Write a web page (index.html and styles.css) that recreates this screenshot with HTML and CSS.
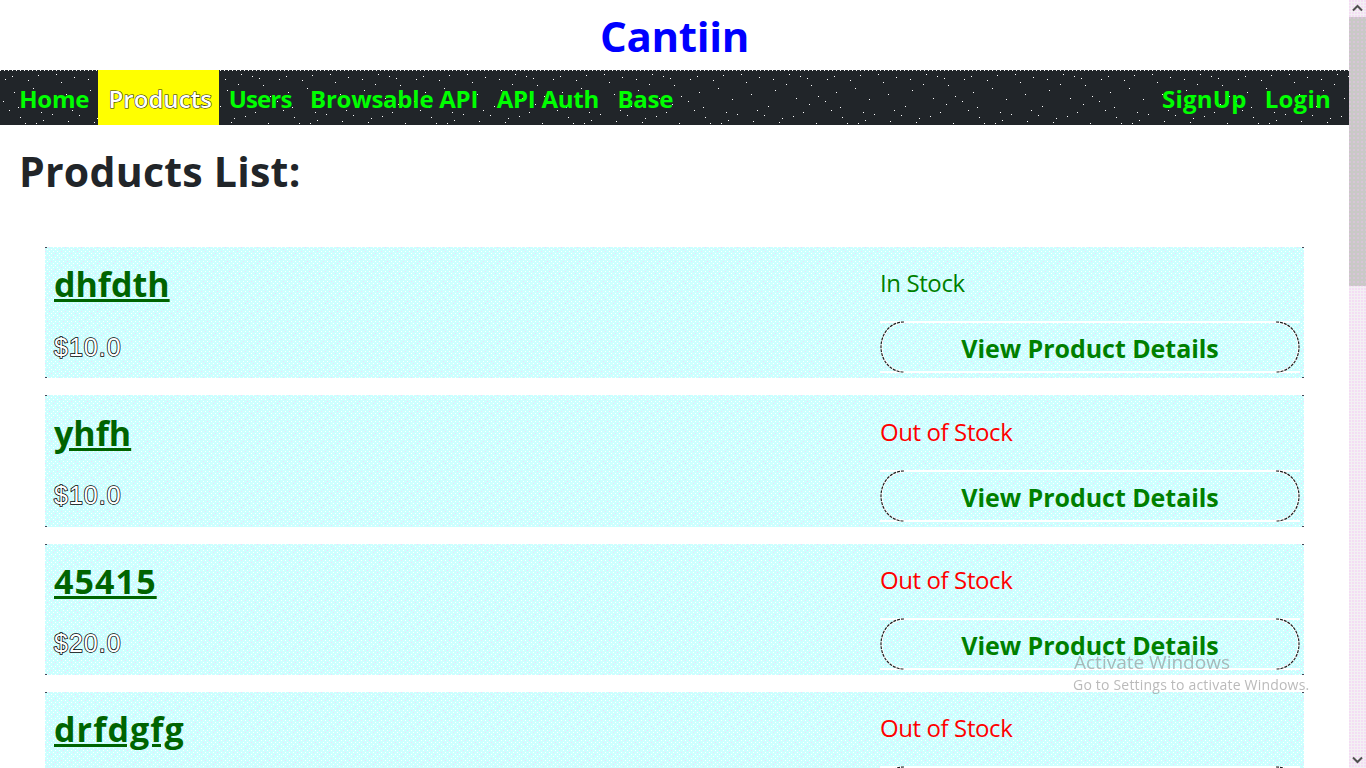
FILE: index.html
```html
<!DOCTYPE html>
<html lang="en">
<head>
<meta charset="utf-8">
<title>Cantiin</title>
<link rel="stylesheet" href="styles.css">
</head>
<body>
<div class="page">
  <h1 class="brand">Cantiin</h1>
  <nav class="nav">
    <div class="nav-group">
      <a class="nav-link">Home</a>
      <a class="nav-link active">Products</a>
      <a class="nav-link tight">Users</a>
      <a class="nav-link">Browsable API</a>
      <a class="nav-link">API Auth</a>
      <a class="nav-link">Base</a>
    </div>
    <div class="nav-group nav-group-end">
      <a class="nav-link">SignUp</a>
      <a class="nav-link">Login</a>
    </div>
  </nav>
  <h2 class="title">Products List:</h2>
  <div class="list">
    <article class="card">
      <div class="info"><a class="name">dhfdth</a><p class="price">$10.0</p></div>
      <div class="side"><p class="stock in">In Stock</p><a class="details">View Product Details</a></div>
    </article>
    <article class="card">
      <div class="info"><a class="name">yhfh</a><p class="price">$10.0</p></div>
      <div class="side"><p class="stock">Out of Stock</p><a class="details">View Product Details</a></div>
    </article>
    <article class="card">
      <div class="info"><a class="name wide">45415</a><p class="price">$20.0</p></div>
      <div class="side"><p class="stock">Out of Stock</p><a class="details">View Product Details</a></div>
    </article>
    <article class="card">
      <div class="info"><a class="name wide">drfdgfg</a><p class="price">$10.0</p></div>
      <div class="side"><p class="stock">Out of Stock</p><a class="details">View Product Details</a></div>
    </article>
  </div>
</div>
<aside class="scrollbar">
  <svg class="arrow" viewBox="0 0 17 17"><path d="M4 10.5l4.5-4.5 4.5 4.5" fill="none" stroke="#505050" stroke-width="2"/></svg>
  <div class="track"><div class="thumb"></div></div>
  <svg class="arrow" viewBox="0 0 17 17"><path d="M4 6.5l4.5 4.5 4.5-4.5" fill="none" stroke="#505050" stroke-width="2"/></svg>
</aside>
<div class="activate">
  <div class="activate-title">Activate Windows</div>
  <div class="activate-sub">Go to Settings to activate Windows.</div>
</div>
</body>
</html>
```
FILE: styles.css
```css
* { box-sizing: border-box; }
html, body { margin: 0; height: 100%; overflow: hidden; }
body {
  display: flex;
  background: #fff;
  font-family: "Open Sans", "Noto Sans", sans-serif;
  color: #212529;
}
p { margin: 0; }
.page { flex: 1; min-width: 0; height: 768px; overflow: hidden; }
.brand {
  margin: 0;
  height: 70px;
  font-size: 42px;
  line-height: 71px;
  font-weight: 700;
  text-align: center;
  color: #0000ff;
  letter-spacing: -0.3px;
}
.nav {
  height: 55px;
  display: flex;
  justify-content: space-between;
  padding: 0 9px 0 10px;
  background-color: #212529;
  background-image:
    linear-gradient(90deg, #fff 1px, transparent 1px),
    url("data:image/svg+xml,%3Csvg xmlns='http://www.w3.org/2000/svg' width='137' height='55' shape-rendering='crispEdges'%3E%3Cpath fill='%23fff' d='M5 9h1v1H5zM14 22h1v1h-1zM3 31h1v1H3zM9 40h1v1H9zM20 47h1v1h-1zM33 18h1v1h-1zM38 5h1v1h-1zM47 29h1v1h-1zM52 44h1v1h-1zM61 12h1v1h-1zM68 51h1v1h-1zM74 7h1v1h-1zM83 36h1v1h-1zM90 20h1v1h-1zM97 48h1v1h-1zM104 4h1v1h-1zM111 28h1v1h-1zM118 42h1v1h-1zM126 15h1v1h-1zM131 53h1v1h-1zM25 53h1v1h-1zM43 50h1v1h-1zM79 45h1v1h-1zM122 8h1v1h-1zM12 6h1v1h-1zM28 10h1v1h-1zM56 4h1v1h-1zM66 24h1v1h-1zM88 9h1v1h-1zM101 14h1v1h-1zM115 6h1v1h-1zM133 26h1v1h-1zM18 37h1v1h-1zM41 42h1v1h-1zM72 40h1v1h-1zM94 52h1v1h-1zM108 46h1v1h-1zM124 34h1v1h-1zM36 53h1v1h-1z'/%3E%3C/svg%3E");
  background-size: 4px 1px, 137px 55px;
  background-repeat: repeat-x, repeat;
}
.nav-group { display: flex; }
.nav-link {
  padding: 0 9.25px;
  font-size: 24px;
  line-height: 58px;
  font-weight: 700;
  color: #00ff00;
  letter-spacing: -0.25px;
}
.nav-link.tight { letter-spacing: -0.85px; }
.nav-group-end .nav-link { letter-spacing: 0.25px; padding: 0 9px; }
.nav-link.active {
  padding: 0 7.5px 0 10px;
  background: #ffff00;
  color: #fff;
  font-weight: 600;
  letter-spacing: 0.05px;
  -webkit-text-stroke: 1.1px #1a1a1a;
  paint-order: stroke fill;
}
.title {
  margin: 0;
  padding: 20px 0 0 19px;
  height: 122px;
  font-size: 41px;
  line-height: 53px;
  font-weight: 700;
  letter-spacing: 0.25px;
}
.list { display: flex; flex-direction: column; gap: 17px; margin: 0 45px; }
.card {
  width: 1259px;
  height: 131.33px;
  flex: none;
  display: grid;
  grid-template-columns: 826px 1fr;
  padding: 14.3px 4px 3px 9px;
  background-color: #ccffff;
  background-image:
    linear-gradient(#445, #445), linear-gradient(#445, #445),
    linear-gradient(#445, #445), linear-gradient(#445, #445),
    url("data:image/svg+xml,%3Csvg xmlns='http://www.w3.org/2000/svg' width='16' height='16' shape-rendering='crispEdges'%3E%3Cpath fill='%23fff' d='M0 0h1v1H0zM8 0h1v1H8zM12 0h1v1h-1zM2 2h1v1H2zM6 2h1v1H6zM10 2h1v1h-1zM4 4h1v1H4zM8 4h1v1H8zM12 4h1v1h-1zM2 6h1v1H2zM6 6h1v1H6zM14 6h1v1h-1zM0 8h1v1H0zM4 8h1v1H4zM12 8h1v1h-1zM6 10h1v1H6zM10 10h1v1h-1zM14 10h1v1h-1zM0 12h1v1H0zM4 12h1v1H4zM8 12h1v1H8zM2 14h1v1H2zM10 14h1v1h-1zM14 14h1v1h-1z'/%3E%3Cpath fill='%23f6d8f8' d='M4 0h1v1H4zM14 2h1v1h-1zM0 4h1v1H0zM10 6h1v1h-1zM8 8h1v1H8zM2 10h1v1H2zM12 12h1v1h-1zM6 14h1v1H6z'/%3E%3C/svg%3E");
  background-size: 2px 1px, 2px 1px, 2px 1px, 2px 1px, 16px 16px;
  background-position: left top, right top, left bottom, right bottom, 0 0;
  background-repeat: no-repeat, no-repeat, no-repeat, no-repeat, repeat;
}
.info { display: flex; flex-direction: column; }
.name {
  font-size: 34px;
  line-height: 46px;
  font-weight: 700;
  color: #006400;
  text-decoration: underline;
  align-self: flex-start;
}
.name.wide { letter-spacing: 1.1px; }
.price {
  margin-top: 24.5px;
  font-family: "Liberation Sans", sans-serif;
  font-size: 25px;
  line-height: 30px;
  color: #fff;
  -webkit-text-stroke: 1.5px #000;
  paint-order: stroke fill;
  letter-spacing: 1px;
}
.side { display: flex; flex-direction: column; gap: 16px; min-width: 0; }
.stock {
  font-size: 24px;
  height: 45px;
  padding-top: 6px;
  color: #ff0000;
  letter-spacing: -0.4px;
  line-height: 32px;
}
.stock.in { color: #008000; }
.details {
  position: relative;
  height: 52px;
  margin-top: -1px;
  border-top: 2px solid #fff;
  border-bottom: 2px solid #fff;
  font-size: 25px;
  line-height: 51px;
  font-weight: 700;
  text-align: center;
  color: #008000;
  letter-spacing: -0.05px;
}
.details::before, .details::after {
  content: "";
  position: absolute;
  top: -2px;
  bottom: -2px;
  width: 24px;
}
.details::before {
  left: 0;
  background: url("data:image/svg+xml,%3Csvg xmlns='http://www.w3.org/2000/svg' width='24' height='52'%3E%3Cg fill='none'%3E%3Cpath stroke='%23fff' stroke-width='2' d='M24 1.5C10 1.5 1.5 13 1.5 26S10 50.5 24 50.5'/%3E%3Cpath stroke='%23222' stroke-width='1.2' stroke-dasharray='3 1' d='M24 1C10 1 1 13 1 26S10 51 24 51'/%3E%3C/g%3E%3C/svg%3E") no-repeat;
}
.details::after {
  right: 0;
  background: url("data:image/svg+xml,%3Csvg xmlns='http://www.w3.org/2000/svg' width='24' height='52'%3E%3Cg fill='none'%3E%3Cpath stroke='%23fff' stroke-width='2' d='M0 1.5C14 1.5 22.5 13 22.5 26S14 50.5 0 50.5'/%3E%3Cpath stroke='%23222' stroke-width='1.2' stroke-dasharray='3 1' d='M0 1C14 1 23 13 23 26S14 51 0 51'/%3E%3C/g%3E%3C/svg%3E") no-repeat;
}
.scrollbar {
  flex: none;
  width: 17px;
  height: 768px;
  display: flex;
  flex-direction: column;
  background-color: #f3f0f3;
  background-image: radial-gradient(circle at 1px 1px, #f4dcf4 0.7px, transparent 1px);
  background-size: 3px 3px;
}
.arrow { display: block; width: 17px; height: 17px; flex: none; }
.track { flex: 1; }
.thumb {
  height: 269px;
  background-color: #c9c9c6;
  background-image: radial-gradient(circle at 1px 1px, #d8c4d8 0.7px, transparent 1px);
  background-size: 4px 4px;
}
.activate {
  position: fixed;
  left: 1073px;
  top: 651px;
  pointer-events: none;
  color: rgba(130, 130, 130, 0.55);
  font-family: "Open Sans", sans-serif;
  white-space: nowrap;
}
.activate-title { font-size: 19px; line-height: 23px; margin-left: 1px; }
.activate-sub { font-size: 14px; line-height: 20px; margin-top: 1px; letter-spacing: 0.2px; }
```
